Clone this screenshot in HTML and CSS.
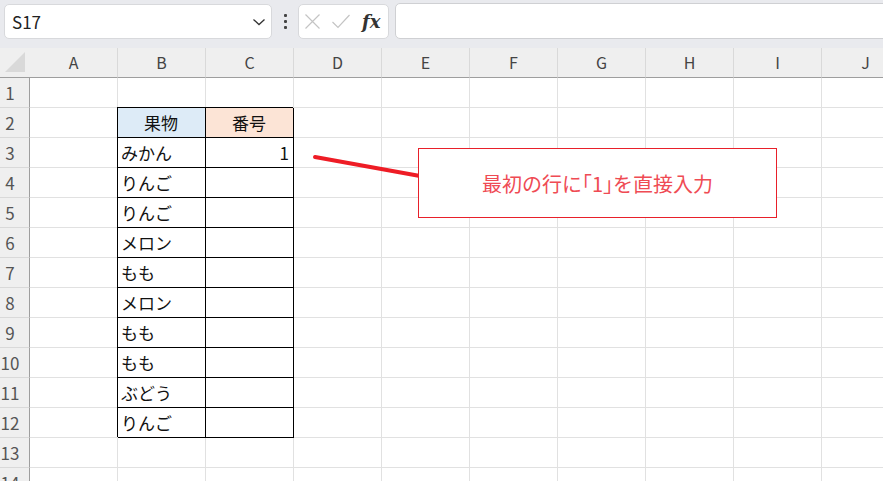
FILE: index.html
```html
<!DOCTYPE html>
<html lang="ja">
<head>
    <meta charset="UTF-8">
    <title>S17</title>
    <link rel="stylesheet" href="styles.css">
</head>
<body>
    <div class="topbar">
        <div class="namebox">
            <span>S17</span>
            <svg class="chev" width="14" height="8" viewBox="0 0 14 8"><path d="M1.5 1.5 L7 6.5 L12.5 1.5" fill="none" stroke="#333" stroke-width="1.3"/></svg>
        </div>
        <div class="dots"><i></i><i></i><i></i></div>
        <div class="fxbox">
            <svg width="15" height="15" viewBox="0 0 15 15"><path d="M0.5 0.5 L14.5 14.5 M14.5 0.5 L0.5 14.5" stroke="#c4c4c4" stroke-width="1.2"/></svg>
            <svg width="18" height="15" viewBox="0 0 18 15"><path d="M0.5 8 L6 13.5 L17.5 1" fill="none" stroke="#c4c4c4" stroke-width="1.2"/></svg>
            <span class="fx">fx</span>
        </div>
        <div class="formula"></div>
    </div>

    <div class="wrap">
        <div class="sheet">
            <div class="corner"><svg width="22" height="22" viewBox="0 0 22 22"><path d="M21 1 L21 21 L1 21 Z" fill="#d9d9d9"/></svg></div>
            <div class="ch">A</div><div class="ch">B</div><div class="ch">C</div><div class="ch">D</div><div class="ch">E</div>
            <div class="ch">F</div><div class="ch">G</div><div class="ch">H</div><div class="ch">I</div><div class="ch">J</div>

            <div class="rh">1</div>
            <div class="c"></div><div class="c"></div><div class="c"></div><div class="c"></div><div class="c"></div>
            <div class="c"></div><div class="c"></div><div class="c"></div><div class="c"></div><div class="c"></div>

            <div class="rh">2</div>
            <div class="c"></div><div class="c t blue mid">果物</div><div class="c t peach mid">番号</div><div class="c"></div><div class="c"></div>
            <div class="c"></div><div class="c"></div><div class="c"></div><div class="c"></div><div class="c"></div>

            <div class="rh">3</div>
            <div class="c"></div><div class="c t">みかん</div><div class="c t num">1</div><div class="c"></div><div class="c"></div>
            <div class="c"></div><div class="c"></div><div class="c"></div><div class="c"></div><div class="c"></div>

            <div class="rh">4</div>
            <div class="c"></div><div class="c t">りんご</div><div class="c t"></div><div class="c"></div><div class="c"></div>
            <div class="c"></div><div class="c"></div><div class="c"></div><div class="c"></div><div class="c"></div>

            <div class="rh">5</div>
            <div class="c"></div><div class="c t">りんご</div><div class="c t"></div><div class="c"></div><div class="c"></div>
            <div class="c"></div><div class="c"></div><div class="c"></div><div class="c"></div><div class="c"></div>

            <div class="rh">6</div>
            <div class="c"></div><div class="c t">メロン</div><div class="c t"></div><div class="c"></div><div class="c"></div>
            <div class="c"></div><div class="c"></div><div class="c"></div><div class="c"></div><div class="c"></div>

            <div class="rh">7</div>
            <div class="c"></div><div class="c t">もも</div><div class="c t"></div><div class="c"></div><div class="c"></div>
            <div class="c"></div><div class="c"></div><div class="c"></div><div class="c"></div><div class="c"></div>

            <div class="rh">8</div>
            <div class="c"></div><div class="c t">メロン</div><div class="c t"></div><div class="c"></div><div class="c"></div>
            <div class="c"></div><div class="c"></div><div class="c"></div><div class="c"></div><div class="c"></div>

            <div class="rh">9</div>
            <div class="c"></div><div class="c t">もも</div><div class="c t"></div><div class="c"></div><div class="c"></div>
            <div class="c"></div><div class="c"></div><div class="c"></div><div class="c"></div><div class="c"></div>

            <div class="rh">10</div>
            <div class="c"></div><div class="c t">もも</div><div class="c t"></div><div class="c"></div><div class="c"></div>
            <div class="c"></div><div class="c"></div><div class="c"></div><div class="c"></div><div class="c"></div>

            <div class="rh">11</div>
            <div class="c"></div><div class="c t">ぶどう</div><div class="c t"></div><div class="c"></div><div class="c"></div>
            <div class="c"></div><div class="c"></div><div class="c"></div><div class="c"></div><div class="c"></div>

            <div class="rh">12</div>
            <div class="c"></div><div class="c t">りんご</div><div class="c t"></div><div class="c"></div><div class="c"></div>
            <div class="c"></div><div class="c"></div><div class="c"></div><div class="c"></div><div class="c"></div>

            <div class="rh">13</div>
            <div class="c"></div><div class="c"></div><div class="c"></div><div class="c"></div><div class="c"></div>
            <div class="c"></div><div class="c"></div><div class="c"></div><div class="c"></div><div class="c"></div>

            <div class="rh">14</div>
            <div class="c"></div><div class="c"></div><div class="c"></div><div class="c"></div><div class="c"></div>
            <div class="c"></div><div class="c"></div><div class="c"></div><div class="c"></div><div class="c"></div>
        </div>

        <!-- 吹き出しと線 -->
        <svg class="arrow" width="883" height="433" viewBox="0 0 883 433">
            <line x1="315" y1="109" x2="420" y2="128" stroke="#ee1c25" stroke-width="4" stroke-linecap="round"/>
        </svg>
        <div class="callout">最初の行に<span class="tight">「1」</span>を直接入力</div>
    </div>
</body>
</html>
```

FILE: styles.css
```css
body {
    margin: 0;
    width: 883px;
    height: 481px;
    overflow: hidden;
    background: #fff;
    font-family: "Noto Sans CJK JP", "Noto Sans", sans-serif;
}
.topbar {
    height: 48px;
    box-sizing: border-box;
    background: #e9eaee;
    display: flex;
    align-items: flex-start;
    padding: 4px 0 0 4px;
}
.namebox {
    width: 268px;
    height: 35px;
    box-sizing: border-box;
    background: #fff;
    border: 1px solid #d8d9dc;
    border-radius: 5px;
    display: flex;
    align-items: center;
    justify-content: space-between;
    padding: 0 5px 0 7px;
    font-size: 17px;
    color: #222;
}
.chev {
    margin-top: 1px;
}
.dots {
    width: 26px;
    height: 35px;
    display: flex;
    flex-direction: column;
    align-items: center;
    justify-content: center;
    gap: 3px;
}
.dots i {
    width: 3px;
    height: 3px;
    background: #444;
    border-radius: 1px;
}
.fxbox {
    width: 91px;
    height: 35px;
    box-sizing: border-box;
    background: #fff;
    border: 1px solid #d8d9dc;
    border-radius: 5px;
    display: flex;
    align-items: center;
    gap: 12px;
    padding-left: 6px;
}
.fxbox svg {
    display: block;
}
.fx {
    font-family: "DejaVu Serif", serif;
    font-style: italic;
    font-weight: bold;
    font-size: 18px;
    color: #333;
}
.formula {
    flex: 1;
    height: 36px;
    margin: -1px -8px 0 6px;
    box-sizing: border-box;
    background: #fff;
    border: 1px solid #cfd0d3;
    border-radius: 5px;
}
.wrap {
    position: relative;
}
.sheet {
    display: grid;
    grid-template-columns: 30px repeat(10, 88px);
    grid-auto-rows: 30px;
    font-size: 17px;
}
.sheet > div {
    box-sizing: border-box;
    line-height: 29px;
}
.corner {
    background: #efefef;
    border-bottom: 1px solid #9e9e9e;
    display: flex;
    align-items: flex-end;
    padding: 0 0 4px 4px;
}
.corner svg {
    display: block;
}
.ch {
    background: #efefef;
    border-right: 1px solid #d9d9d9;
    border-bottom: 1px solid #9e9e9e;
    text-align: center;
    font-size: 16px;
    color: #444;
}
.rh {
    background: #efefef;
    border-right: 1px solid #9e9e9e;
    border-bottom: 1px solid #d9d9d9;
    text-align: center;
    padding-right: 9px;
    color: #555;
}
.c {
    border-right: 1px solid #e1e1e1;
    border-bottom: 1px solid #e1e1e1;
    padding: 0 4px 0 3px;
    color: #111;
}
.t {
    border-right-color: #000;
    border-bottom-color: #000;
    box-shadow: -1px -1px 0 0 #000;
}
.blue {
    background: #ddebf7;
}
.peach {
    background: #fce4d6;
}
.mid {
    text-align: center;
}
.num {
    text-align: right;
}
.arrow {
    position: absolute;
    left: 0;
    top: 0;
    pointer-events: none;
}
.callout {
    position: absolute;
    left: 418px;
    top: 100px;
    width: 359px;
    height: 70px;
    box-sizing: border-box;
    border: 1px solid #e8202a;
    background: #fff;
    color: #ef4b54;
    font-size: 20px;
    display: flex;
    align-items: center;
    justify-content: center;
    padding-top: 1px;
}
.tight {
    font-feature-settings: "halt";
}
```
